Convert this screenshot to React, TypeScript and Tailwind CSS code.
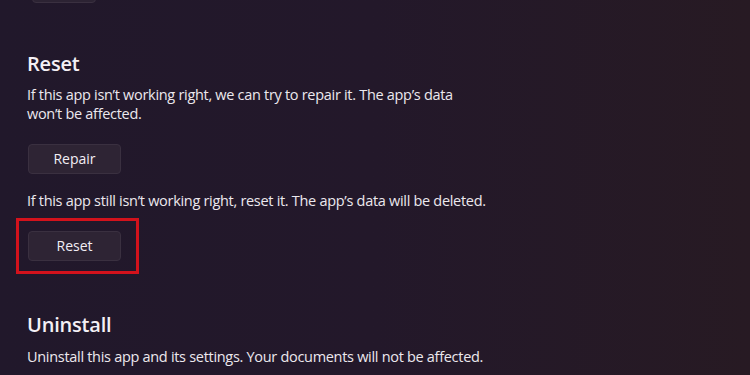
import React from "react";

const font = { fontFamily: '"Open Sans", "Noto Sans", Lato, sans-serif' };

function Btn({ label }: { label: string }) {
  return (
    <button className="w-[93px] h-[30px] rounded-[4px] bg-[#2e2434] border border-[#3a3040] text-[#f2eef4] text-[14px] leading-none flex items-center justify-center">
      {label}
    </button>
  );
}

export default function App() {
  return (
    <div
      className="w-[750px] h-[375px] overflow-hidden bg-gradient-to-r from-[#21182b] via-[#23182a] to-[#271a23] text-[#f4f0f5] relative"
      style={font}
    >
      <div className="absolute left-[32px] top-[-27px] w-[64px] h-[30px] rounded-[4px] bg-[#2c2333] border border-[#3a3040]" />
      <div className="pl-[27px] pt-[51px] flex flex-col">
        <h2 className="text-[20px] font-semibold leading-[26px] tracking-[-0.2px]">Reset</h2>
        <p className="mt-[8px] text-[14.5px] leading-[19px] tracking-[-0.3px] text-[#ece8ee]">
          If this app isn’t working right, we can try to repair it. The app’s data
          <br />
          won’t be affected.
        </p>
        <div className="mt-[21px] ml-[1px]">
          <Btn label="Repair" />
        </div>
        <p className="mt-[17px] text-[14.5px] leading-[19px] tracking-[-0.3px] text-[#ece8ee]">
          If this app still isn’t working right, reset it. The app’s data will be deleted.
        </p>
        <div className="mt-[8px] ml-[-11px] w-[123px] h-[56px] border-[3px] border-[#d3121c] flex items-center justify-start pl-[9px]">
          <Btn label="Reset" />
        </div>
        <h2 className="mt-[38px] text-[20px] font-semibold leading-[26px] tracking-[-0.2px]">Uninstall</h2>
        <p className="mt-[9px] text-[14.5px] leading-[19px] tracking-[-0.3px] text-[#ece8ee]">
          Uninstall this app and its settings. Your documents will not be affected.
        </p>
      </div>
    </div>
  );
}
